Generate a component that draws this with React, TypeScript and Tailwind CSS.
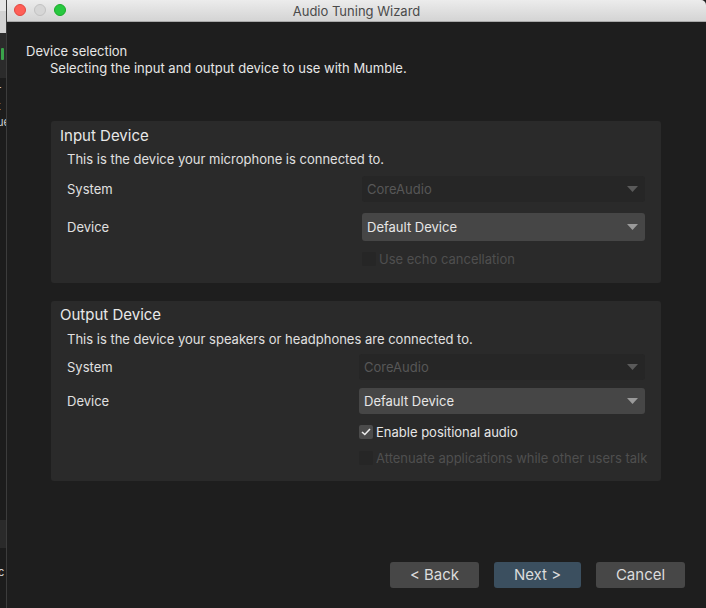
import React from "react";

const font = { fontFamily: 'Inter, "Liberation Sans", Arial, sans-serif' };

const Arrow = ({ dim }: { dim?: boolean }) => (
  <svg width="11" height="6" viewBox="0 0 11 6" className="shrink-0">
    <path d="M0 0 L11 0 L5.5 6 Z" fill={dim ? "#5a5a5a" : "#9a9a9a"} />
  </svg>
);

const Combo = ({
  value,
  disabled,
  className,
}: {
  value: string;
  disabled?: boolean;
  className: string;
}) => (
  <div
    className={`flex items-center justify-between rounded-[3px] pl-[5px] pr-[7px] ${
      disabled ? "bg-[#262626] text-[#575757]" : "bg-[#464646] text-[#e6e6e6]"
    } ${className}`}
  >
    <span>{value}</span>
    <Arrow dim={disabled} />
  </div>
);

const Check = ({
  label,
  checked,
  disabled,
}: {
  label: string;
  checked?: boolean;
  disabled?: boolean;
}) => (
  <div className="flex items-center gap-[3px] h-[16px]">
    <div
      className={`w-[14px] h-[14px] rounded-[2px] flex items-center justify-center ${
        disabled ? "bg-[#262626]" : "bg-[#4b4b4b]"
      }`}
    >
      {checked && (
        <svg width="10" height="8" viewBox="0 0 10 8">
          <path
            d="M1 4 L3.8 6.5 L9 1"
            stroke="#ececec"
            strokeWidth="1.6"
            fill="none"
          />
        </svg>
      )}
    </div>
    <span className={disabled ? "text-[#4f4f4f]" : "text-[#e6e6e6]"}>
      {label}
    </span>
  </div>
);

const Row = ({
  label,
  children,
  className,
}: {
  label: string;
  children: React.ReactNode;
  className?: string;
}) => (
  <div className={`flex items-center ${className ?? ""}`}>
    <span className="w-[295px] pl-[16px] text-[#e0e0e0]">{label}</span>
    {children}
  </div>
);

export default function App() {
  return (
    <div
      className="flex w-[706px] h-[608px] bg-[#1e1e1e] text-[13px] leading-[16px] overflow-hidden"
      style={font}
    >
      {/* window behind, peeking on the left */}
      <div className="w-[7px] flex flex-col shrink-0 bg-[#1c1c1c] border-r border-[#3c3c3c] overflow-hidden">
        <div className="h-[11px] bg-[#e6e6e6]" />
        <div className="h-[22px] bg-[#d2d2d2]" />
        <div className="h-[45px] bg-[#2b2b2b] pt-[15px] pl-[1px]">
          <div className="w-[3px] h-[12px] bg-[#3aa34a] rounded-[1px]" />
        </div>
        <div className="h-[55px] bg-[#1c1c1c] text-[#cfcfcf] text-[11px] leading-[16px] pt-[4px] -ml-[3px] whitespace-nowrap">
          <div>r</div>
          <div>t</div>
          <div>ue</div>
        </div>
        <div className="h-[387px]" />
        <div className="h-[28px] bg-[#2a2a2a]" />
        <div className="h-[36px] text-[#cfcfcf] text-[11px] pt-[16px] -ml-[2px]">c</div>
      </div>

      {/* dialog window */}
      <div className="flex-1 flex flex-col">
        <div className="h-[22px] shrink-0 relative flex items-center justify-center bg-gradient-to-b from-[#ececec] to-[#d4d4d4] border-b border-[#a9a9a9] rounded-tr-[5px]">
          <div className="absolute left-[7px] top-[4px] flex gap-[8px]">
            <div className="w-[12px] h-[12px] rounded-full bg-[#fe5f57] border border-[#e2463f]" />
            <div className="w-[12px] h-[12px] rounded-full bg-[#d6d6d6] border border-[#c2c2c2]" />
            <div className="w-[12px] h-[12px] rounded-full bg-[#28c840] border border-[#1aab29]" />
          </div>
          <span className="text-[13px] text-[#4a4a4a]">Audio Tuning Wizard</span>
        </div>

        <div className="flex-1 flex flex-col text-[#e6e6e6]">
          <div className="pt-[21px] pl-[19px]">
            <div>Device selection</div>
            <div className="pl-[24px] pt-[1px]">
              Selecting the input and output device to use with Mumble.
            </div>
          </div>

          {/* Input Device */}
          <div className="mt-[45px] ml-[44px] mr-[45px] h-[162px] rounded-[3px] bg-[#2a2a2a] pt-[5px]">
            <div className="pl-[9px] text-[15px] leading-[20px] text-[#e8e8e8]">
              Input Device
            </div>
            <div className="pl-[16px] pt-[5px] text-[#e0e0e0]">
              This is the device your microphone is connected to.
            </div>
            <Row label="System" className="mt-[9px]">
              <Combo value="CoreAudio" disabled className="w-[283px] h-[26px] ml-[16px]" />
            </Row>
            <Row label="Device" className="mt-[11px]">
              <Combo value="Default Device" className="w-[283px] h-[28px] ml-[16px]" />
            </Row>
            <div className="pl-[311px] mt-[10px]">
              <Check label="Use echo cancellation" disabled />
            </div>
          </div>

          {/* Output Device */}
          <div className="mt-[18px] ml-[44px] mr-[45px] h-[180px] rounded-[3px] bg-[#2a2a2a] pt-[4px]">
            <div className="pl-[9px] text-[15px] leading-[20px] text-[#e8e8e8]">
              Output Device
            </div>
            <div className="pl-[16px] pt-[6px] text-[#e0e0e0]">
              This is the device your speakers or headphones are connected to.
            </div>
            <Row label="System" className="mt-[7px]">
              <Combo value="CoreAudio" disabled className="w-[286px] h-[26px] ml-[13px]" />
            </Row>
            <Row label="Device" className="mt-[8px]">
              <Combo value="Default Device" className="w-[286px] h-[26px] ml-[13px]" />
            </Row>
            <div className="pl-[308px] mt-[10px]">
              <Check label="Enable positional audio" checked />
            </div>
            <div className="pl-[308px] mt-[10px]">
              <Check label="Attenuate applications while other users talk" disabled />
            </div>
          </div>

          <div className="flex-1" />
          <div className="flex justify-end gap-[15px] pr-[21px] pb-[20px] text-[15px] text-[#dcdcdc]">
            <button className="w-[89px] h-[26px] rounded-[3px] bg-[#474747]">&lt; Back</button>
            <button className="w-[87px] h-[26px] rounded-[3px] bg-[#3b4f5f]">Next &gt;</button>
            <button className="w-[89px] h-[26px] rounded-[3px] bg-[#474747]">Cancel</button>
          </div>
        </div>
      </div>
    </div>
  );
}
